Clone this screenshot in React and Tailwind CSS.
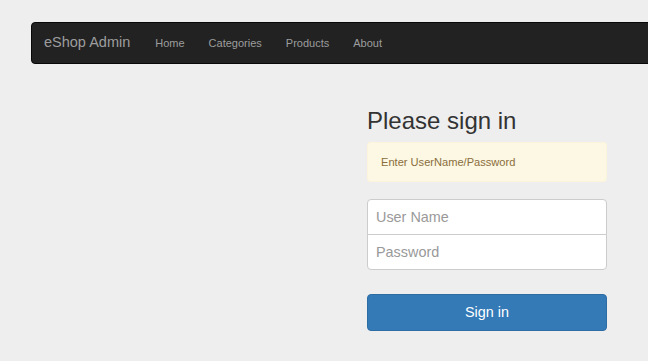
import React from 'react';

const links = ['Home', 'Categories', 'Products', 'About'];

export default function App() {
    return (
        <div className="min-h-[361px] w-[648px] overflow-hidden bg-[#eeeeee] pt-[22px]" style={{ fontFamily: '"Liberation Sans", Arial, sans-serif' }}>
            <nav className="ml-[31px] flex h-[42px] w-[680px] items-center rounded-[4px] border border-[#080808] bg-[#222222]">
                <a className="px-[12px] text-[14.5px] text-[#9d9d9d]">eShop Admin</a>
                <ul className="ml-[1px] flex items-center">
                    {links.map(link => (
                        <li key={link} className="px-[12px] text-[11px] text-[#9d9d9d]">{link}</li>
                    ))}
                </ul>
            </nav>

            <main className="ml-[367px] mt-[44px] w-[240px]">
                <h2 className="h-[26px] text-[24px] leading-[26px] text-[#333333]">Please sign in</h2>
                <div className="mt-[8px] flex h-[40px] items-center rounded-[3px] border border-[#fbf3dc] bg-[#fcf8e3] px-[13px] text-[11.1px] text-[#8a6d3b]">
                    Enter UserName/Password
                </div>
                <form className="mt-[17px] flex flex-col">
                    <input
                        type="text"
                        placeholder="User Name"
                        className="-mb-[1px] h-[36px] rounded-t-[4px] border border-[#cccccc] bg-white px-[8px] text-[14.4px] text-[#555] placeholder:text-[#999999] outline-none"
                    />
                    <input
                        type="password"
                        placeholder="Password"
                        className="h-[36px] rounded-b-[4px] border border-[#cccccc] bg-white px-[8px] text-[14.4px] text-[#555] placeholder:text-[#999999] outline-none"
                    />
                    <button
                        type="button"
                        className="mt-[24px] h-[37px] rounded-[4px] border border-[#2e6da4] bg-[#337ab7] text-[14.4px] text-white"
                    >
                        Sign in
                    </button>
                </form>
            </main>
        </div>
    );
}
